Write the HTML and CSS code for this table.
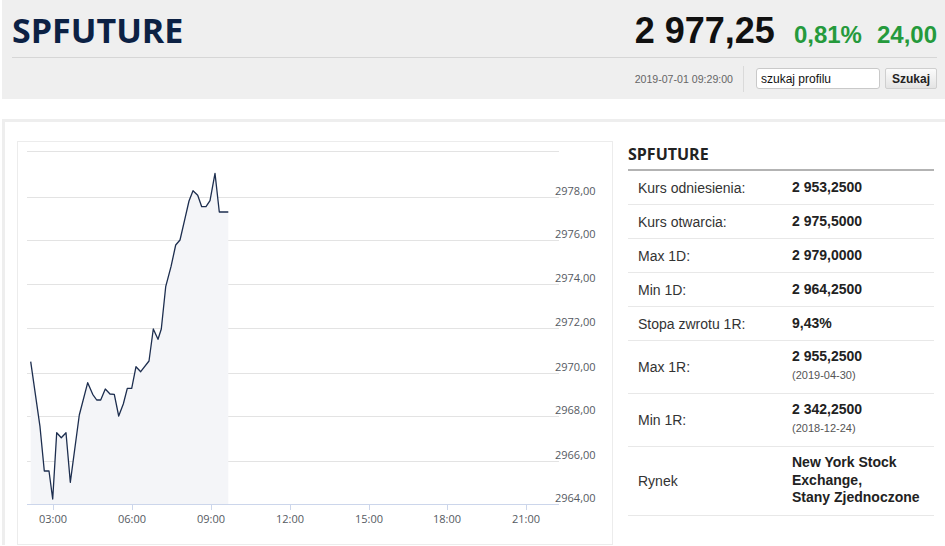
FILE: index.html
```html
<!DOCTYPE html>
<html lang="pl">
<head>
<meta charset="utf-8">
<title>SPFUTURE</title>
<link rel="stylesheet" href="styles.css">
</head>
<body>
<header class="top">
  <div class="top-row">
    <h1 class="ticker">SPFUTURE</h1>
    <div class="quote">
      <span class="price">2 977,25</span>
      <span class="chg pct">0,81%</span>
      <span class="chg">24,00</span>
    </div>
  </div>
  <div class="tool-row">
    <span class="stamp">2019-07-01 09:29:00</span>
    <span class="sep"></span>
    <input class="search" type="text" value="szukaj profilu">
    <button class="btn" type="button">Szukaj</button>
  </div>
</header>

<main class="panel">
  <div class="chart-box">
    <svg class="chart" width="594" height="402" viewBox="18 142 594 402" xmlns="http://www.w3.org/2000/svg">
      <g stroke="#e3e3e3" stroke-width="1">
        <line x1="27" y1="151.5" x2="559" y2="151.5"/>
        <line x1="27" y1="197.5" x2="559" y2="197.5"/>
        <line x1="27" y1="240.5" x2="559" y2="240.5"/>
        <line x1="27" y1="284.5" x2="559" y2="284.5"/>
        <line x1="27" y1="328.5" x2="559" y2="328.5"/>
        <line x1="27" y1="373.5" x2="559" y2="373.5"/>
        <line x1="27" y1="416.5" x2="559" y2="416.5"/>
        <line x1="27" y1="461.5" x2="559" y2="461.5"/>
      </g>
      <polygon fill="#f4f5f8" points="30.7,361.7 40,426.7 44.3,471 49,471 52.7,499 56.7,432.7 61.3,437.7 66,432.7 70.3,482.3 79.3,415 87.7,382.7 92.7,394.3 96.7,400 100.7,400 105.3,389 110,394 114.3,394.3 118.7,416 123.3,404 127.3,388.3 131.7,388.3 136,366.7 140.7,371.7 149,361 153.3,329 158,339.3 161.3,329 165.7,286.7 171,266.7 175.7,245 180,240 185,218.3 189,201 193,190.7 197.7,195.3 201.7,206.7 206,206.7 210,200.7 215,173.3 219.3,212 228.3,212 228.3,504 30.7,504"/>
      <line x1="27" y1="504.5" x2="559" y2="504.5" stroke="#ccd6eb" stroke-width="1"/>
      <g stroke="#ccd6eb" stroke-width="1">
        <line x1="53.5" y1="504" x2="53.5" y2="510"/>
        <line x1="132.5" y1="504" x2="132.5" y2="510"/>
        <line x1="211.5" y1="504" x2="211.5" y2="510"/>
        <line x1="290.5" y1="504" x2="290.5" y2="510"/>
        <line x1="369.5" y1="504" x2="369.5" y2="510"/>
        <line x1="447.5" y1="504" x2="447.5" y2="510"/>
        <line x1="526.5" y1="504" x2="526.5" y2="510"/>
      </g>
      <polyline fill="none" stroke="#1d2e4f" stroke-width="1.3" stroke-linejoin="round" points="30.7,361.7 40,426.7 44.3,471 49,471 52.7,499 56.7,432.7 61.3,437.7 66,432.7 70.3,482.3 79.3,415 87.7,382.7 92.7,394.3 96.7,400 100.7,400 105.3,389 110,394 114.3,394.3 118.7,416 123.3,404 127.3,388.3 131.7,388.3 136,366.7 140.7,371.7 149,361 153.3,329 158,339.3 161.3,329 165.7,286.7 171,266.7 175.7,245 180,240 185,218.3 189,201 193,190.7 197.7,195.3 201.7,206.7 206,206.7 210,200.7 215,173.3 219.3,212 228.3,212"/>
      <g class="ylab">
        <text x="555" y="195">2978,00</text>
        <text x="555" y="238">2976,00</text>
        <text x="555" y="282">2974,00</text>
        <text x="555" y="326">2972,00</text>
        <text x="555" y="371">2970,00</text>
        <text x="555" y="414">2968,00</text>
        <text x="555" y="459">2966,00</text>
        <text x="555" y="502">2964,00</text>
      </g>
      <g class="xlab">
        <text x="53" y="523">03:00</text>
        <text x="132" y="523">06:00</text>
        <text x="211" y="523">09:00</text>
        <text x="290" y="523">12:00</text>
        <text x="369" y="523">15:00</text>
        <text x="447" y="523">18:00</text>
        <text x="526" y="523">21:00</text>
      </g>
    </svg>
  </div>

  <aside class="info">
    <h2 class="info-title">SPFUTURE</h2>
    <div class="row"><span class="lbl">Kurs odniesienia:</span><span class="val">2 953,2500</span></div>
    <div class="row"><span class="lbl">Kurs otwarcia:</span><span class="val">2 975,5000</span></div>
    <div class="row"><span class="lbl">Max 1D:</span><span class="val">2 979,0000</span></div>
    <div class="row"><span class="lbl">Min 1D:</span><span class="val">2 964,2500</span></div>
    <div class="row"><span class="lbl">Stopa zwrotu 1R:</span><span class="val">9,43%</span></div>
    <div class="row tall"><span class="lbl">Max 1R:</span><span class="val">2 955,2500<small class="date">(2019-04-30)</small></span></div>
    <div class="row tall"><span class="lbl">Min 1R:</span><span class="val">2 342,2500<small class="date">(2018-12-24)</small></span></div>
    <div class="row market"><span class="lbl">Rynek</span><span class="val">New York Stock Exchange,<br>Stany Zjednoczone</span></div>
  </aside>
</main>
</body>
</html>
```

FILE: styles.css
```css
html, body {
  margin: 0;
  padding: 0;
  background: #fff;
}

body {
  font-family: Arial, "Liberation Sans", sans-serif;
  color: #333;
  width: 945px;
  overflow: hidden;
}

.top {
  margin-left: 2px;
  background: #efefef;
  padding: 0 8px 0 10px;
  height: 99px;
  box-sizing: border-box;
}

.top-row {
  display: flex;
  justify-content: space-between;
  align-items: baseline;
  height: 58px;
  box-sizing: border-box;
  padding-top: 13px;
  border-bottom: 1px solid #d6d6d6;
}

.ticker {
  margin: 0;
  font-family: "Open Sans", sans-serif;
  font-weight: 700;
  font-size: 34px;
  line-height: 35px;
  color: #0c2144;
}

.quote {
  display: flex;
  align-items: baseline;
}

.price {
  font-family: Arial, "Liberation Sans", sans-serif;
  font-weight: 700;
  font-size: 36px;
  line-height: 36px;
  color: #111;
  margin-right: 19px;
}

.chg {
  font-weight: 700;
  font-size: 24px;
  color: #259a3c;
}

.chg.pct {
  margin-right: 15px;
}

.tool-row {
  display: flex;
  justify-content: flex-end;
  align-items: center;
  height: 41px;
}

.stamp {
  font-size: 10.6px;
  color: #666;
}

.sep {
  width: 1px;
  height: 26px;
  background: #dadada;
  margin: 0 12px 0 10px;
}

.search {
  width: 124px;
  height: 21px;
  box-sizing: border-box;
  border: 1px solid #c9c9c9;
  border-radius: 3px;
  padding: 0 4px;
  font-family: Arial, "Liberation Sans", sans-serif;
  font-size: 12px;
  color: #111;
  background: #fff;
  margin: 0;
}

.btn {
  margin: 0 0 0 5px;
  width: 52px;
  height: 21px;
  box-sizing: border-box;
  border: 1px solid #cfcfcf;
  border-radius: 2px;
  background: linear-gradient(#fbfbfb, #e4e4e4);
  font-family: Arial, "Liberation Sans", sans-serif;
  font-weight: 700;
  font-size: 12px;
  color: #222;
  padding: 0;
}

.panel {
  margin: 20px 0 0 2px;
  border-top: 3px solid #eeeeee;
  border-left: 3px solid #eeeeee;
  padding: 19px 0 0 12px;
  display: flex;
  gap: 15px;
  align-items: flex-start;
}

.chart-box {
  width: 594px;
  height: 402px;
  border: 1px solid #ececec;
  background: #fff;
  flex: none;
}

.chart {
  display: block;
}

.ylab text,
.xlab text {
  font-family: "Open Sans", sans-serif;
  font-size: 11px;
  fill: #555a62;
}

.xlab text {
  text-anchor: middle;
}

.info {
  width: 306px;
  flex: none;
}

.info-title {
  margin: 3px 0 0;
  padding-bottom: 5px;
  border-bottom: 2px solid #b3b3b3;
  font-family: "Open Sans", sans-serif;
  font-weight: 700;
  font-size: 16px;
  line-height: 20px;
  color: #222;
}

.row {
  display: flex;
  align-items: center;
  min-height: 33px;
  border-bottom: 1px solid #e8e8e8;
  font-size: 14px;
}

.lbl {
  flex: 0 0 164px;
  box-sizing: border-box;
  padding-left: 10px;
  color: #333;
}

.val {
  font-weight: 700;
  color: #222;
  line-height: 17px;
}

.row.tall .val {
  padding: 7px 0 9px;
}

.date {
  display: block;
  margin-top: 1px;
  font-weight: 400;
  font-size: 11px;
  line-height: 18px;
  color: #555;
}

.row.market .val {
  line-height: 17.5px;
  padding: 7px 0 8px;
}
```
